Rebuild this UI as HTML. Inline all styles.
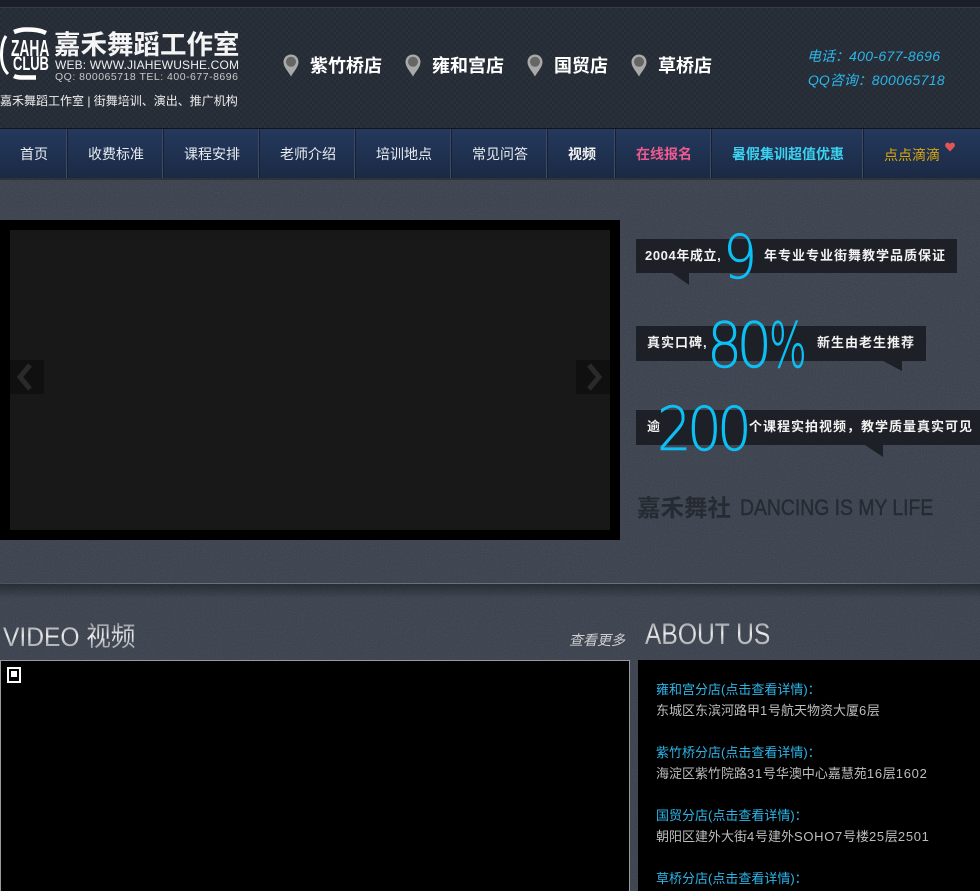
<!DOCTYPE html>
<html lang="zh-CN"><head><meta charset="utf-8"><title>嘉禾舞蹈工作室</title>
<style>
html,body{margin:0;padding:0;background:#363d49}
#p{position:relative;width:980px;height:891px;overflow:hidden;background:#363d49;font-family:"Liberation Sans","Noto Sans CJK SC",sans-serif;color:#fff}
.a{position:absolute}
.t{position:absolute;white-space:nowrap;line-height:20px}
#hd{left:0;top:8px;width:980px;height:120px;background-color:#262c36;background-image:linear-gradient(45deg,#2a303a 25%,transparent 25%,transparent 75%,#2a303a 75%),linear-gradient(45deg,#2a303a 25%,transparent 25%,transparent 75%,#2a303a 75%);background-size:6px 6px;background-position:0 0,3px 3px}
.sn{font-size:18px;font-weight:700;color:#fff;top:56px}
.pin{position:absolute;top:54px;width:16px;height:23px}
.nav{font-size:14px;top:144px;color:#e8ecf2}
.div{position:absolute;top:129px;width:2px;height:49px;background:linear-gradient(90deg,#3d4c66 50%,#16202f 50%)}
.box{position:absolute;background:#1d2027}
.tri{position:absolute}
.cb{font-size:13px;font-weight:700;letter-spacing:1px;color:#f2f2f2}
.num{position:absolute;white-space:nowrap;font-family:"DejaVu Sans",sans-serif;font-weight:200;color:#0cc0f5;line-height:1;transform-origin:0 0;-webkit-text-stroke:.5px #0cc0f5}
.h{position:absolute;white-space:nowrap;font-weight:400;background:linear-gradient(180deg,#8c9096,#ececec 45%,#8a8d92);-webkit-background-clip:text;background-clip:text;color:transparent;line-height:30px;transform-origin:0 0}
.ti{font-size:13px;color:#2cb5e8;left:656px}
.bd{font-size:13px;color:#bdbdbd;left:656px}
.bd b{font-weight:400;letter-spacing:.7px}
.c{font-family:"Noto Sans CJK TC",sans-serif}
.ph b{font-weight:400;letter-spacing:.35px}
</style></head><body><div id="p">

<svg class="a" style="left:0;top:178px;opacity:.16" width="980" height="713"><filter id="n"><feTurbulence type="fractalNoise" baseFrequency=".9" numOctaves="2"/><feColorMatrix type="saturate" values="0"/></filter><rect width="980" height="713" filter="url(#n)"/></svg>

<div class="a" style="left:0;top:0;width:980px;height:7px;background:#1a1f29"></div>
<div class="a" style="left:0;top:7px;width:980px;height:1px;background:#363c47"></div>
<div class="a" id="hd"></div>
<div class="a" style="left:0;top:128px;width:980px;height:1px;background:#12151b"></div>

<svg class="a" style="left:0;top:25px" width="56" height="60" fill="none" stroke="#fff">
<path d="M46 8 C40 5 34 4.500 26 4.500 C22 4.500 19 5 14 7" stroke-width="4.500"/>
<path d="M6 11 C2 17 1.500 24 1.500 30 C1.500 39 4 45 8 49" stroke-width="3"/>
<path d="M14 51 C18 53 22 52.500 27 52.500 L36 52.500" stroke-width="4.500"/>
</svg>
<div class="t" style="left:11px;top:38px;font-size:23px;font-weight:700;transform:scaleX(.6);transform-origin:0 0">ZAHA</div>
<div class="t" style="left:13px;top:55px;font-size:19px;font-weight:700;transform:scaleX(.68);transform-origin:0 0">CLUB</div>
<div class="t" style="left:54px;top:32px;font-size:26.500px;line-height:27px;font-weight:700;color:#f4f4f4">嘉禾舞蹈工作室</div>
<div class="t" style="left:55px;top:55px;font-size:12px;letter-spacing:.15px;color:#eee">WEB: WWW.JIAHEWUSHE.COM</div>
<div class="t" style="left:55px;top:67px;font-size:10.500px;letter-spacing:.5px;color:#c8c8c8">QQ: 800065718 TEL: 400-677-8696</div>
<div class="t" style="left:0;top:91px;font-size:12px;color:#eee">嘉禾舞蹈工作室 | 街舞培训、演出、推广机构</div>

<svg width="0" height="0" style="position:absolute"><defs><g id="pin"><path d="M8 .5C3.700.5.500 3.800.500 8c0 5 4.500 9 7.500 14.500C11 17 15.500 13 15.500 8 15.500 3.800 12.300.5 8 .5z" fill="#a9a9a9"/><circle cx="8" cy="7.800" r="5" fill="#666"/></g></defs></svg>
<svg class="pin" style="left:283px"><use href="#pin"/></svg>
<svg class="pin" style="left:405px"><use href="#pin"/></svg>
<svg class="pin" style="left:527px"><use href="#pin"/></svg>
<svg class="pin" style="left:631px"><use href="#pin"/></svg>
<div class="t sn" style="left:310px">紫竹桥店</div>
<div class="t sn" style="left:432px">雍和宫店</div>
<div class="t sn" style="left:554px">国贸店</div>
<div class="t sn" style="left:658px">草桥店</div>
<div class="t ph" style="left:807px;top:46px;font-size:14px;font-style:italic;color:#2cb5e8">电话<span class="c">：</span><b>400-677-8696</b></div>
<div class="t ph" style="left:808px;top:70px;font-size:14px;font-style:italic;color:#2cb5e8">QQ咨询<span class="c">：</span><b>800065718</b></div>

<div class="a" style="left:0;top:129px;width:980px;height:49px;background:linear-gradient(180deg,#25395e,#1b2a44)"></div>
<div class="a" style="left:0;top:178px;width:980px;height:2px;background:#2d323b"></div>
<div class="div" style="left:66px"></div><div class="div" style="left:162px"></div><div class="div" style="left:258px"></div><div class="div" style="left:354px"></div><div class="div" style="left:450px"></div><div class="div" style="left:546px"></div><div class="div" style="left:614px"></div><div class="div" style="left:710px"></div><div class="div" style="left:862px"></div>
<div class="t nav" style="left:20px">首页</div>
<div class="t nav" style="left:88px">收费标准</div>
<div class="t nav" style="left:184px">课程安排</div>
<div class="t nav" style="left:280px">老师介绍</div>
<div class="t nav" style="left:376px">培训地点</div>
<div class="t nav" style="left:472px">常见问答</div>
<div class="t nav" style="left:568px;font-weight:700;color:#f2f2f2">视频</div>
<div class="t nav" style="left:636px;font-weight:700;color:#ee5a90">在线报名</div>
<div class="t nav" style="left:732px;font-weight:700;color:#3cd2f0">暑假集训超值优惠</div>
<div class="t nav" style="left:884px;top:145px;color:#d9a70c">点点滴滴</div>
<svg class="a" style="left:945px;top:142px" width="10" height="10"><path d="M5 9.500L.7 5C-.5 3.300.2.800 2.500.6 3.700.5 4.500 1.100 5 2 5.500 1.100 6.300.5 7.500.6 9.800.8 10.500 3.300 9.300 5z" fill="#e25555"/></svg>

<div class="a" style="left:0;top:220px;width:620px;height:320px;background:#000"></div>
<div class="a" style="left:10px;top:230px;width:600px;height:300px;background:#181818"></div>
<div class="a" style="left:10px;top:360px;width:34px;height:34px;background:#101010"></div>
<div class="a" style="left:576px;top:360px;width:34px;height:34px;background:#101010"></div>
<svg class="a" style="left:10px;top:360px" width="34" height="34"><path d="M20 5L10 17 20 29" fill="none" stroke="#2a2a2a" stroke-width="5"/></svg>
<svg class="a" style="left:576px;top:360px" width="34" height="34"><path d="M13 5L23 17 13 29" fill="none" stroke="#2a2a2a" stroke-width="5"/></svg>

<div class="box" style="left:636px;top:239px;width:321px;height:34px"></div>
<svg class="tri" style="left:672px;top:273px" width="17" height="12"><path d="M0 0H17V12z" fill="#1d2027"/></svg>
<div class="box" style="left:636px;top:326px;width:290px;height:35px"></div>
<svg class="tri" style="left:883px;top:361px" width="19" height="10"><path d="M0 0H19V10z" fill="#1d2027"/></svg>
<div class="box" style="left:636px;top:410px;width:344px;height:35px"></div>
<svg class="tri" style="left:865px;top:445px" width="18" height="12"><path d="M0 0H18V12z" fill="#1d2027"/></svg>

<div class="t cb" style="left:645px;top:246px;letter-spacing:.6px">2004年成立,</div>
<div class="t cb" style="left:764px;top:246px;">年专业专业街舞教学品质保证</div>
<div class="t cb" style="left:647px;top:333px">真实口碑,</div>
<div class="t cb" style="left:817px;top:333px">新生由老生推荐</div>
<div class="t cb" style="left:647px;top:417px">逾</div>
<div class="t cb" style="left:749px;top:417px;">个课程实拍视频，教学质量真实可见</div>

<div class="num" style="left:723px;top:227px;font-size:61px;transform:scaleX(.88)">9</div>
<div class="num" style="left:707px;top:315px;font-size:62px;letter-spacing:-6px;transform:scaleX(.89)">80</div>
<div class="num" style="left:769px;top:315px;font-size:62px;transform:scaleX(.64)">%</div>
<div class="num" style="left:657px;top:399px;font-size:61px;letter-spacing:-5px;transform:scaleX(.89)">200</div>

<div class="t" style="left:637px;top:497px;line-height:22px;font-size:23.500px;font-weight:700;color:#262b33">嘉禾舞社</div>
<div class="t" style="left:740px;top:497px;line-height:22px;font-size:22px;color:#262b33;transform:scaleX(.88);transform-origin:0 0;-webkit-text-stroke:.4px #262b33">DANCING IS MY LIFE</div>

<div class="a" style="left:0;top:583px;width:980px;height:1px;background:linear-gradient(90deg,#4a525c,#68707a 15%,#68707a 85%,#4a525c)"></div>
<div class="a" style="left:0;top:584px;width:980px;height:14px;background:linear-gradient(180deg,rgba(20,24,30,.55),rgba(20,24,30,0))"></div>

<div class="h" style="left:3px;top:622px;font-size:27px;transform:scaleX(.91)">VIDEO 视频</div>
<div class="h" style="left:645px;top:620px;font-size:30px;transform:scaleX(.82)">ABOUT US</div>
<div class="t" style="left:569px;top:630px;font-size:14px;font-style:italic;color:#cfcfcf">查看更多</div>

<div class="a" style="left:0;top:660px;width:628px;height:231px;background:#000;border:1px solid #9a9a9a;border-bottom:0"></div>
<div class="a" style="left:7px;top:667px;width:14px;height:16px;background:#fff"></div>
<div class="a" style="left:9px;top:669px;width:10px;height:12px;background:#000"></div>
<div class="a" style="left:11px;top:671px;width:6px;height:6px;background:#fff"></div>

<div class="a" style="left:638px;top:660px;width:342px;height:231px;background:#000"></div>
<div class="t ti" style="top:679px">雍和宫分店(点击查看详情)<span class="c">：</span></div>
<div class="t bd" style="top:701px">东城区东滨河路甲<b>1</b>号航天物资大厦<b>6</b>层</div>
<div class="t ti" style="top:742px">紫竹桥分店(点击查看详情)<span class="c">：</span></div>
<div class="t bd" style="top:764px">海淀区紫竹院路<b>31</b>号华澳中心嘉慧苑<b>16</b>层<b>1602</b></div>
<div class="t ti" style="top:805px">国贸分店(点击查看详情)<span class="c">：</span></div>
<div class="t bd" style="top:827px">朝阳区建外大街<b>4</b>号建外<b>SOHO7</b>号楼<b>25</b>层<b>2501</b></div>
<div class="t ti" style="top:868px">草桥分店(点击查看详情)<span class="c">：</span></div>

</div></body></html>
